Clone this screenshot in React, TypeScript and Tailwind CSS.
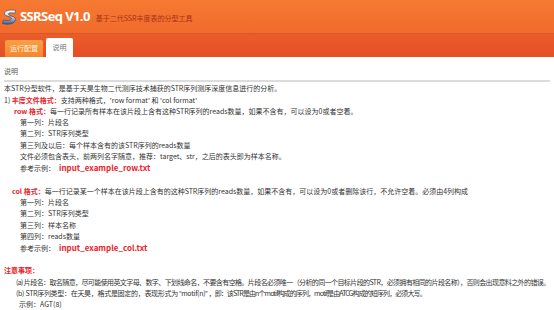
import { FC } from 'react';

const Logo: FC = () => (
    <svg width="15" height="16" viewBox="0 0 15 16">
        <defs>
            <linearGradient id="lg" x1="0" y1="0" x2="0" y2="1">
                <stop offset="0" stopColor="#ffffff" />
                <stop offset="0.5" stopColor="#c9d3de" />
                <stop offset="1" stopColor="#2f5c9a" />
            </linearGradient>
        </defs>
        <path d="M13.5 1.5 C9 0.5 3 1 2.5 4.5 C2 7.5 9.5 7 9.5 9.5 C9.5 11.5 5 12 1.5 11 L0.5 14.5 C6 16 13 15 13.5 10.5 C14 7 6.5 7.5 6.5 5 C6.5 3.5 10 3.5 13 4.3 Z" fill="url(#lg)" stroke="#1e3f73" strokeWidth="0.6" />
    </svg>
);

const Red: FC<{ children: React.ReactNode }> = ({ children }) => (
    <span className="font-bold text-[#e8232b]">{children}</span>
);

const App: FC = () => {
    return (
        <div className="w-[554px] h-[310px] overflow-hidden bg-white text-[#333] font-['Noto_Sans_CJK_SC',sans-serif]">
            <div className="h-[34px] flex items-center pl-[2px] bg-gradient-to-b from-[#f67a31] to-[#f06a2c] border-b border-[#d9582a]">
                <Logo />
                <span className="ml-[3px] text-[13px] tracking-[-0.6px] font-bold text-white font-['Open_Sans',sans-serif] leading-none">SSRSeq V1.0</span>
                <span className="ml-[6px] text-[7px] text-[#a8321c] leading-none mt-[3px]">基于二代SSR丰度表的分型工具</span>
            </div>
            <div className="h-[23px] flex items-end pl-[5px] gap-[3px] bg-gradient-to-b from-[#eb5c2b] to-[#e54e24]">
                <div className="h-[17px] w-[38px] flex items-center justify-center rounded-t-[2px] bg-gradient-to-b from-[#f9a044] to-[#f4852f] text-[7px] text-[#fff3e0]">运行配置</div>
                <div className="h-[19px] w-[27px] flex items-center justify-center rounded-t-[2px] bg-white text-[7px] text-[#777]">说明</div>
            </div>
            <div className="px-[4px] pt-[9px] text-[7px] leading-[11.3px]">
                <div className="text-[#555] pb-[3px] border-b-2 border-[#dcdcdc]">说明</div>
                <div className="pt-[1px]">
                    <div>本STR分型软件，是基于天昊生物二代测序技术捕获的STR序列测序深度信息进行的分析。</div>
                    <div>1) <Red>丰度文件格式：</Red>支持两种格式，'row format' 和 'col format'</div>
                    <div className="pl-[10px]"><Red>row 格式：</Red>每一行记录所有样本在该片段上含有这种STR序列的reads数量，如果不含有，可以设为0或者空着。</div>
                    <div className="pl-[16px]">
                        <div>第一列：片段名</div>
                        <div>第二列：STR序列类型</div>
                        <div>第三列及以后：每个样本含有的该STR序列的reads数量</div>
                        <div>文件必须包含表头，前两列名字随意，推荐：target、str，之后的表头即为样本名称。</div>
                        <div>参考示例：<span className="ml-[4px] text-[8px] font-bold text-[#e8232b]">input_example_row.txt</span></div>
                    </div>
                    <div className="h-[11px]" />
                    <div className="pl-[8px]"><Red>col 格式：</Red>每一行记录某一个样本在该片段上含有的这种STR序列的reads数量，如果不含有，可以设为0或者删除该行，不允许空着。必须由4列构成</div>
                    <div className="pl-[16px]">
                        <div>第一列：片段名</div>
                        <div>第二列：STR序列类型</div>
                        <div>第三列：样本名称</div>
                        <div>第四列：reads数量</div>
                        <div>参考示例：<span className="ml-[4px] text-[8px] font-bold text-[#e8232b]">input_example_col.txt</span></div>
                    </div>
                    <div className="h-[11px]" />
                    <div><Red>注意事项：</Red></div>
                    <div className="pl-[12px] whitespace-nowrap tracking-[-0.6px]">(a) 片段名：取名随意，尽可能使用英文字母、数字、下划线命名，不要含有空格。片段名必须唯一（分析的同一个目标片段的STR，必须拥有相同的片段名称），否则会出现意料之外的错误。</div>
                    <div className="pl-[12px] whitespace-nowrap tracking-[-0.3px]">(b) STR序列类型：在天昊，格式是固定的，表现形式为 <span className="font-['Liberation_Sans',sans-serif]">“</span>motif(n)<span className="font-['Liberation_Sans',sans-serif]">”</span> <span className="tracking-[-0.9px]">，即：该STR是由n个motif构成的序列，motif是由ATCG构成的短序列，必须大写。</span></div>
                    <div className="pl-[15px]">示例：AGT(8)</div>
                </div>
            </div>
        </div>
    );
};

export default App;
